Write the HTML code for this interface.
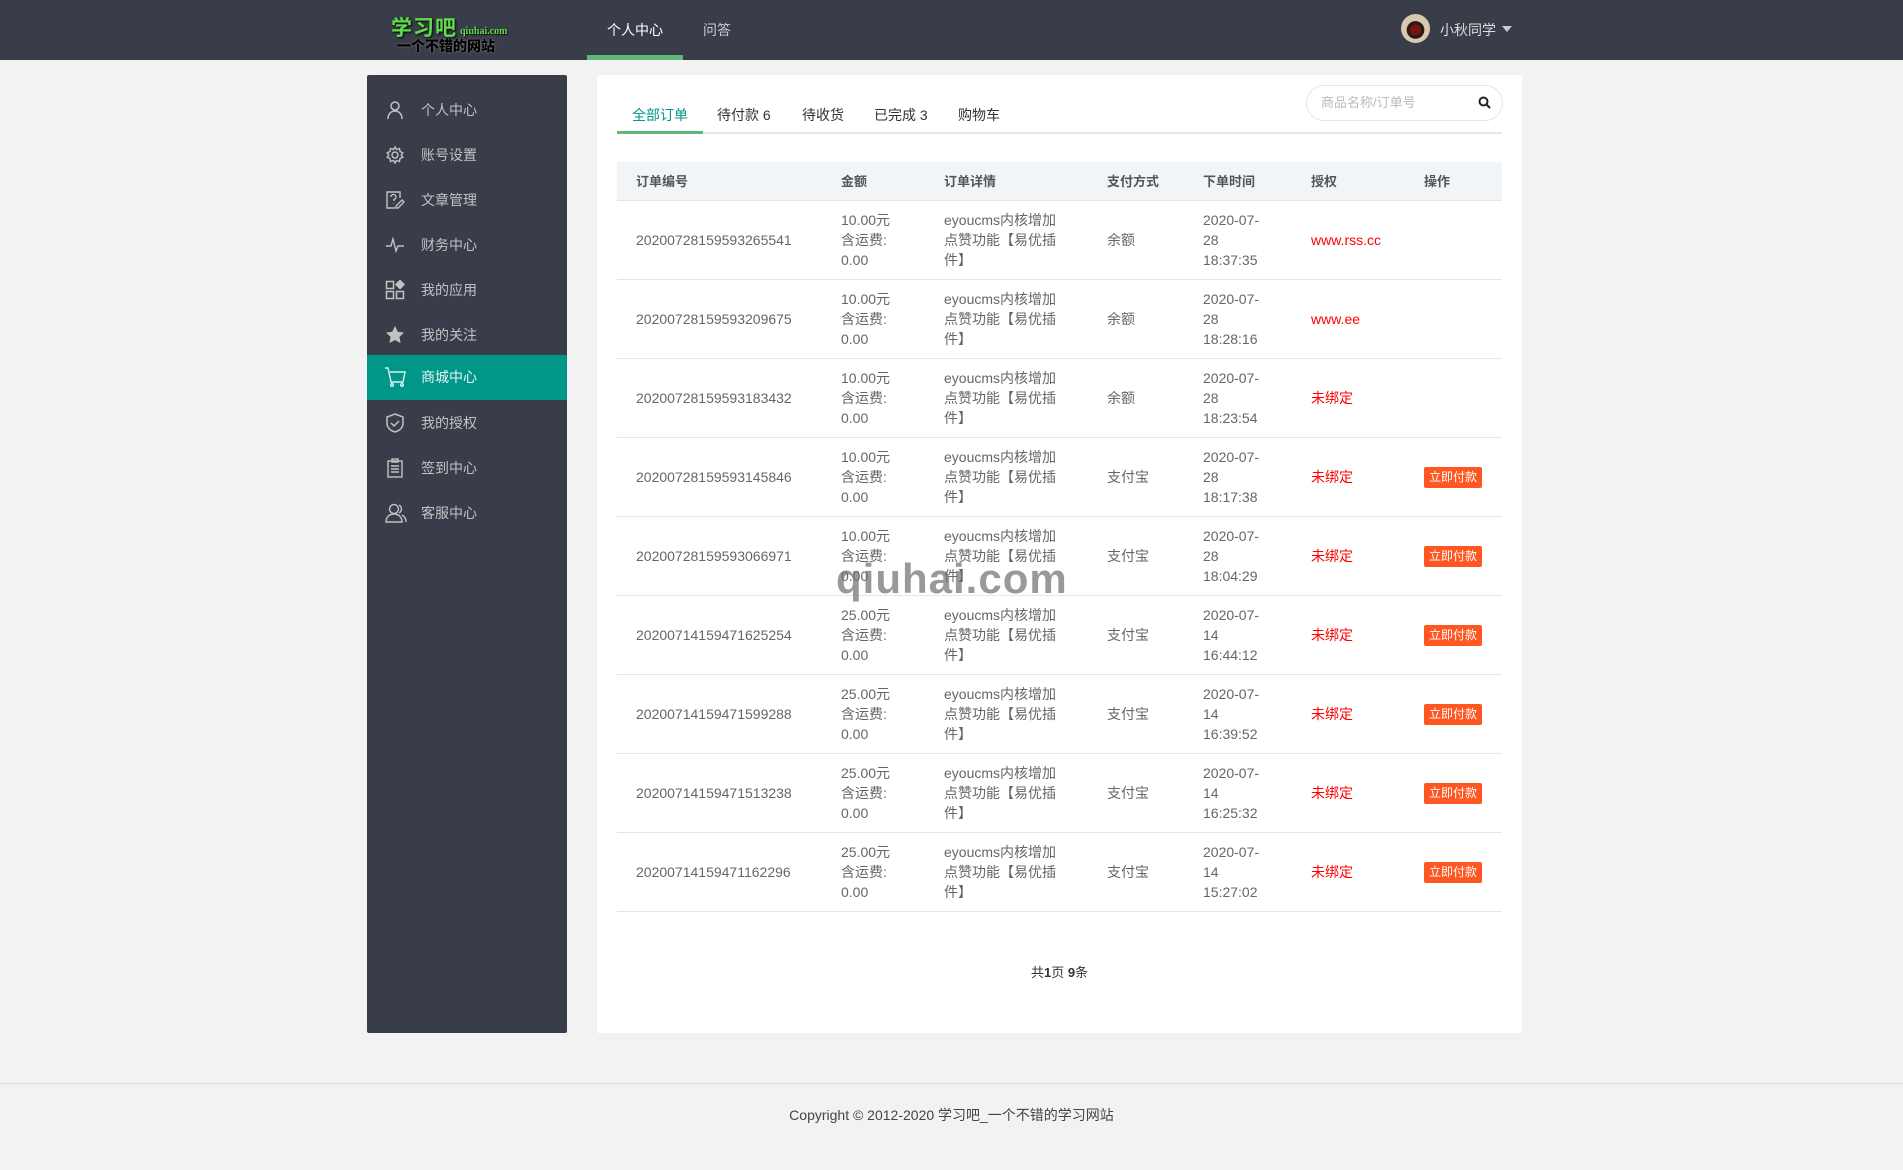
<!DOCTYPE html>
<html><head><meta charset="utf-8"><style>
*{margin:0;padding:0;box-sizing:border-box}
body{width:1903px;height:1170px;background:#f2f2f2;font-family:"Liberation Sans","Noto Sans CJK SC",sans-serif;font-size:14px;color:#666;position:relative;overflow:hidden}
.hd{position:absolute;left:0;top:0;width:1903px;height:60px;background:#393d49}
.abs{position:absolute}
.side{position:absolute;left:367px;top:75px;width:200px;height:958px;background:#393d49;border-radius:2px}
.it{position:absolute;left:0;width:200px;height:45px;color:#c2c2c2;font-size:14px;line-height:45px}
.it span{position:absolute;left:54px}
.it svg{position:absolute;left:18px;top:12px}
.it.on{background:#009688;color:#e8f5f3}
.card{position:absolute;left:597px;top:75px;width:925px;height:958px;background:#fff;border-radius:2px}
table{position:absolute;left:20px;top:87px;border-collapse:collapse;table-layout:fixed;width:885px}
th{height:38px;background:#f2f5f8;text-align:left;font-weight:bold;color:#555;font-size:13px;border-bottom:1px solid #e6e6e6;padding:0}
td{height:79px;border-bottom:1px solid #e6e6e6;line-height:20px;padding:0;vertical-align:middle;color:#666}
th:first-child,td:first-child{padding-left:19px}
.red{color:#f00}
.btn{display:inline-block;background:#ff5722;color:#fff;font-size:12px;height:21px;line-height:21px;padding:0 5px;border-radius:2px}
</style></head><body>
<div class="hd">
 <div class="abs" style="left:391px;top:12px;font-size:21px;font-weight:bold;color:#5ede4a;text-shadow:1px 1px 2px #000;letter-spacing:1px;font-family:'Noto Sans CJK SC',sans-serif">学习吧</div>
 <div class="abs" style="left:460px;top:26px;font-size:10px;font-weight:bold;color:#5ede4a;font-family:'Liberation Serif',serif;text-shadow:1px 1px 1px #000">qiuhai.com</div>
 <div class="abs" style="left:397px;top:38px;font-size:14px;font-weight:900;color:#000;text-shadow:0 0 2px #888;line-height:16px;font-family:'Noto Sans CJK SC',sans-serif">一个不错的网站</div>
 <div class="abs" style="left:607px;top:20px;color:#fff;font-size:14px">个人中心</div>
 <div class="abs" style="left:587px;top:55px;width:96px;height:5px;background:#5fb878"></div>
 <div class="abs" style="left:703px;top:20px;color:#ccc;font-size:14px">问答</div>
 <div class="abs" style="left:1401px;top:14px;width:29px;height:29px;border-radius:50%;background:radial-gradient(circle at 50% 55%,#7a1010 0 25%,#2a1a14 26% 40%,#d9c8b0 42%)"></div>
 <div class="abs" style="left:1440px;top:20px;color:#ddd;font-size:14px">小秋同学</div>
 <div class="abs" style="left:1502px;top:26px;width:0;height:0;border-left:5px solid transparent;border-right:5px solid transparent;border-top:6px solid #ccc"></div>
</div>

<div class="side">
 <div class="it" style="top:13px"><svg width="20" height="20" viewBox="0 0 20 20" fill="none" stroke="#c2c2c2" stroke-width="1.5"><circle cx="10" cy="6" r="4"/><path d="M3 19c0-5 3-8 7-8s7 3 7 8"/></svg><span>个人中心</span></div>
 <div class="it" style="top:58px"><svg width="20" height="20" viewBox="0 0 20 20" fill="none" stroke="#c2c2c2" stroke-width="1.4"><circle cx="10" cy="10" r="3"/><path d="M10 2l1.5 2.5 3-1 .5 3 2.8 1.3-1.6 2.2 1.6 2.2-2.8 1.3-.5 3-3-1L10 18l-1.5-2.5-3 1-.5-3-2.8-1.3 1.6-2.2L2.2 7.8 5 6.5l.5-3 3 1z"/></svg><span>账号设置</span></div>
 <div class="it" style="top:103px"><svg width="20" height="20" viewBox="0 0 20 20" fill="none" stroke="#c2c2c2" stroke-width="1.4"><path d="M15 8V2H2v16h8"/><path d="M6 7a2.5 2.5 0 1 1 3 2.4V11M8.5 13.5v.5"/><path d="M17 10l2 2-6 6h-2v-2z"/></svg><span>文章管理</span></div>
 <div class="it" style="top:148px"><svg width="20" height="20" viewBox="0 0 20 20" fill="none" stroke="#c2c2c2" stroke-width="1.4"><path d="M1 11h5l2-7 3 12 2-5h6"/></svg><span>财务中心</span></div>
 <div class="it" style="top:193px"><svg width="20" height="20" viewBox="0 0 20 20" fill="none" stroke="#c2c2c2" stroke-width="1.5"><rect x="1.5" y="1.5" width="7" height="7"/><rect x="1.5" y="11.5" width="7" height="7"/><rect x="11.5" y="11.5" width="7" height="7"/><path d="M15 0.5l4 4-4 4-4-4z" fill="#c2c2c2"/></svg><span>我的应用</span></div>
 <div class="it" style="top:238px"><svg width="20" height="20" viewBox="0 0 20 20"><path d="M10 1l2.8 5.8 6.2.8-4.6 4.3 1.2 6.2L10 15l-5.6 3.1 1.2-6.2L1 7.6l6.2-.8z" fill="#c2c2c2"/></svg><span>我的关注</span></div>
 <div class="it on" style="top:280px"><svg width="22" height="20" viewBox="0 0 22 20" fill="none" stroke="#e0f2ef" stroke-width="1.4"><path d="M0 1h3l3 14h12l2-10H5"/><circle cx="7" cy="18" r="1.3"/><circle cx="17" cy="18" r="1.3"/></svg><span>商城中心</span></div>
 <div class="it" style="top:326px"><svg width="20" height="20" viewBox="0 0 20 20" fill="none" stroke="#c2c2c2" stroke-width="1.5"><path d="M10 1l8 3v6c0 5-4 8-8 9-4-1-8-4-8-9V4z"/><path d="M6 10l3 3 5-5"/></svg><span>我的授权</span></div>
 <div class="it" style="top:371px"><svg width="20" height="20" viewBox="0 0 20 20" fill="none" stroke="#c2c2c2" stroke-width="1.4"><rect x="3" y="3" width="14" height="16"/><rect x="7" y="1" width="6" height="3"/><path d="M6 8h8M6 11h8M6 14h8"/></svg><span>签到中心</span></div>
 <div class="it" style="top:416px"><svg width="22" height="20" viewBox="0 0 22 20" fill="none" stroke="#c2c2c2" stroke-width="1.4"><circle cx="9" cy="6" r="4.5"/><path d="M1 19c0-5 3.5-8 8-8s8 3 8 8z"/><path d="M14 2a4.5 4.5 0 0 1 0 8M17 12c2 1 4 3 4 7"/></svg><span>客服中心</span></div>
</div>

<div class="card">
 <div class="abs" style="left:35px;top:30px;color:#009688">全部订单</div>
 <div class="abs" style="left:120px;top:30px;color:#333">待付款 6</div>
 <div class="abs" style="left:205px;top:30px;color:#333">待收货</div>
 <div class="abs" style="left:277px;top:30px;color:#333">已完成 3</div>
 <div class="abs" style="left:361px;top:30px;color:#333">购物车</div>
 <div class="abs" style="left:20px;top:57px;width:885px;height:2px;background:#e6e6e6"></div>
 <div class="abs" style="left:20px;top:56px;width:86px;height:3px;background:#5fb878"></div>
 <div class="abs" style="left:709px;top:10px;width:197px;height:36px;border:1px solid #e6e6e6;border-radius:18px;color:#bbb;font-size:13px;line-height:34px;padding-left:14px">商品名称/订单号
  <svg class="abs" style="left:171px;top:10px" width="13" height="13" viewBox="0 0 13 13" fill="none" stroke="#222" stroke-width="2"><circle cx="5.5" cy="5.5" r="4"/><path d="M8.5 8.5l3.5 3.5"/></svg></div>
 <table>
  <colgroup><col style="width:224px"><col style="width:103px"><col style="width:163px"><col style="width:96px"><col style="width:108px"><col style="width:113px"><col style="width:78px"></colgroup>
  <tr><th>订单编号</th><th>金额</th><th>订单详情</th><th>支付方式</th><th>下单时间</th><th>授权</th><th>操作</th></tr>
  <tr><td>20200728159593265541</td><td>10.00元<br>含运费:<br>0.00</td><td>eyoucms内核增加<br>点赞功能【易优插<br>件】</td><td>余额</td><td>2020-07-<br>28<br>18:37:35</td><td class="red">www.rss.cc</td><td></td></tr>
  <tr><td>20200728159593209675</td><td>10.00元<br>含运费:<br>0.00</td><td>eyoucms内核增加<br>点赞功能【易优插<br>件】</td><td>余额</td><td>2020-07-<br>28<br>18:28:16</td><td class="red">www.ee</td><td></td></tr>
  <tr><td>20200728159593183432</td><td>10.00元<br>含运费:<br>0.00</td><td>eyoucms内核增加<br>点赞功能【易优插<br>件】</td><td>余额</td><td>2020-07-<br>28<br>18:23:54</td><td class="red">未绑定</td><td></td></tr>
  <tr><td>20200728159593145846</td><td>10.00元<br>含运费:<br>0.00</td><td>eyoucms内核增加<br>点赞功能【易优插<br>件】</td><td>支付宝</td><td>2020-07-<br>28<br>18:17:38</td><td class="red">未绑定</td><td><span class="btn">立即付款</span></td></tr>
  <tr><td>20200728159593066971</td><td>10.00元<br>含运费:<br>0.00</td><td>eyoucms内核增加<br>点赞功能【易优插<br>件】</td><td>支付宝</td><td>2020-07-<br>28<br>18:04:29</td><td class="red">未绑定</td><td><span class="btn">立即付款</span></td></tr>
  <tr><td>20200714159471625254</td><td>25.00元<br>含运费:<br>0.00</td><td>eyoucms内核增加<br>点赞功能【易优插<br>件】</td><td>支付宝</td><td>2020-07-<br>14<br>16:44:12</td><td class="red">未绑定</td><td><span class="btn">立即付款</span></td></tr>
  <tr><td>20200714159471599288</td><td>25.00元<br>含运费:<br>0.00</td><td>eyoucms内核增加<br>点赞功能【易优插<br>件】</td><td>支付宝</td><td>2020-07-<br>14<br>16:39:52</td><td class="red">未绑定</td><td><span class="btn">立即付款</span></td></tr>
  <tr><td>20200714159471513238</td><td>25.00元<br>含运费:<br>0.00</td><td>eyoucms内核增加<br>点赞功能【易优插<br>件】</td><td>支付宝</td><td>2020-07-<br>14<br>16:25:32</td><td class="red">未绑定</td><td><span class="btn">立即付款</span></td></tr>
  <tr><td>20200714159471162296</td><td>25.00元<br>含运费:<br>0.00</td><td>eyoucms内核增加<br>点赞功能【易优插<br>件】</td><td>支付宝</td><td>2020-07-<br>14<br>15:27:02</td><td class="red">未绑定</td><td><span class="btn">立即付款</span></td></tr>
 </table>
 <div class="abs" style="left:0;width:925px;top:887px;text-align:center;color:#333;font-size:13px">共<b>1</b>页 <b>9</b>条</div>
</div>
<div class="abs" style="left:836px;top:555px;font-size:42px;font-weight:bold;color:rgba(110,110,110,.7);letter-spacing:1px">qiuhai.com</div>
<div class="abs" style="left:0;top:1083px;width:1903px;height:1px;background:#ddd"></div>
<div class="abs" style="left:0;width:1903px;top:1105px;text-align:center;color:#444;font-size:14px">Copyright © 2012-2020 学习吧_一个不错的学习网站</div>
</body></html>
